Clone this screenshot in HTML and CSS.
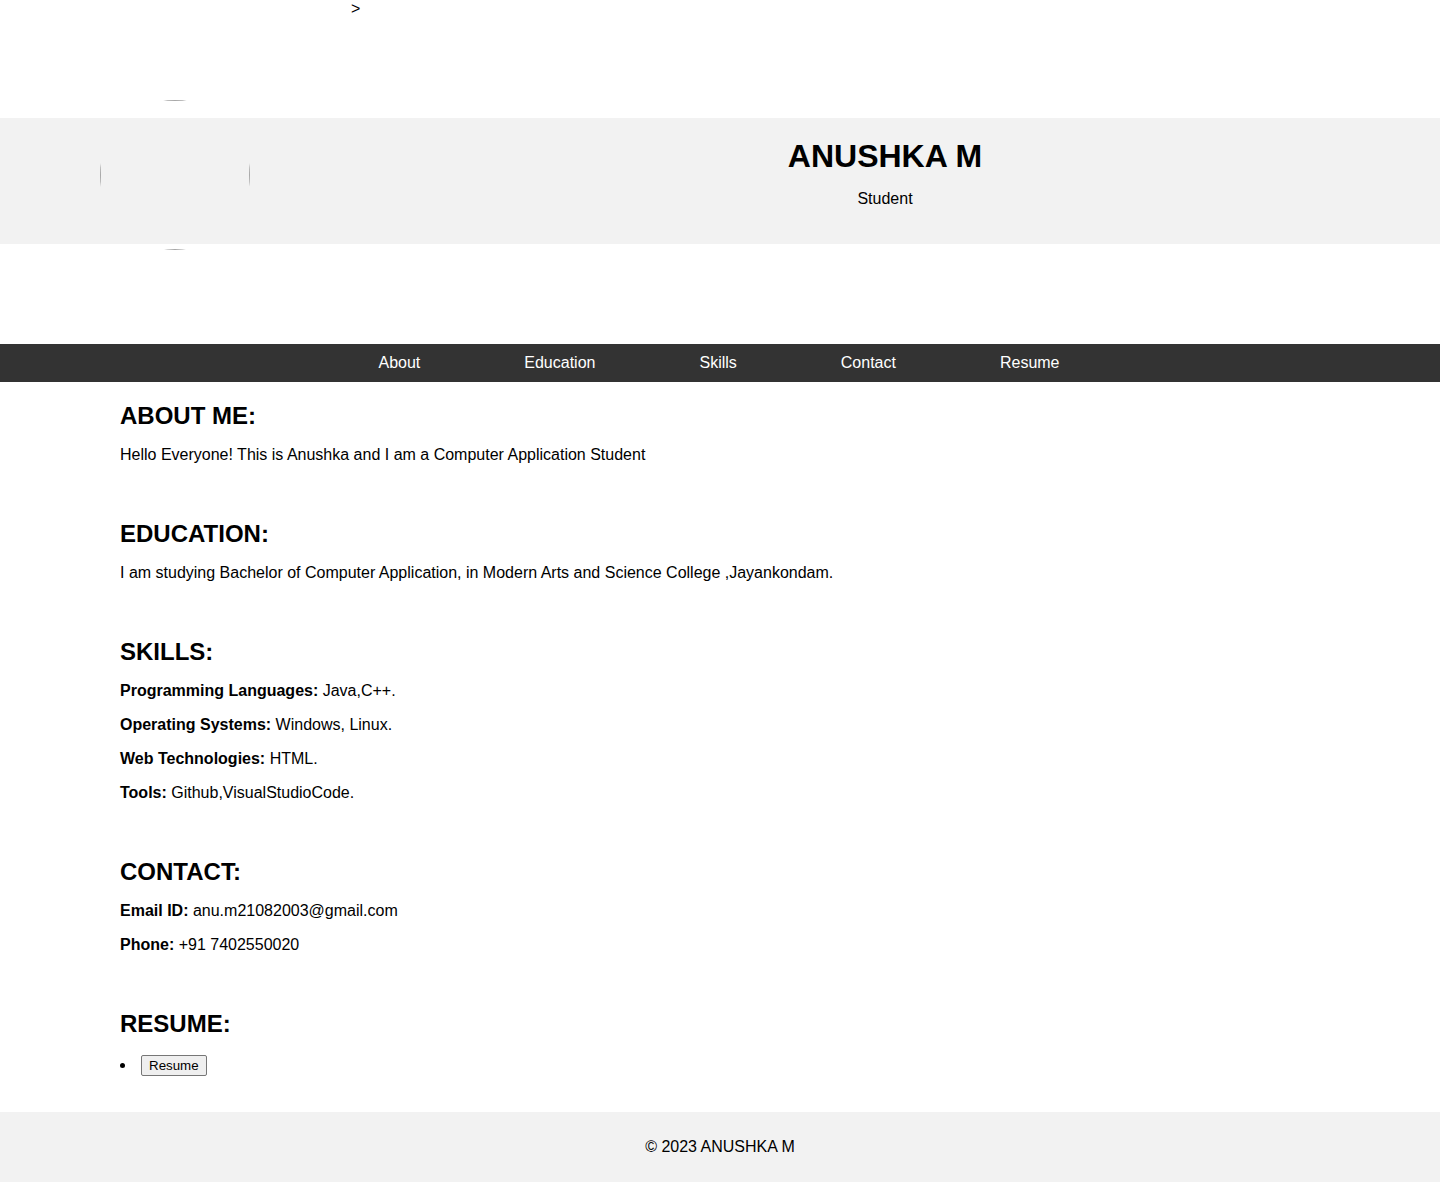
FILE: index.html
```html
<!DOCTYPE html>
<html lang="en">
<head>
<meta charset="utf-8">
<title>ANUSHKA M</title>
<link rel="stylesheet" href="styles.css">
</head>
<body>
<div class="stray">&gt;</div>
<div class="avatar"><span class="avatar-frame"></span></div>
<header class="hero">
  <div class="hero-text">
    <h1>ANUSHKA M</h1>
    <p>Student</p>
  </div>
</header>
<nav class="topnav">
  <a href="#about">About</a>
  <a href="#education">Education</a>
  <a href="#skills">Skills</a>
  <a href="#contact">Contact</a>
  <a href="#resume">Resume</a>
</nav>
<main class="content">
  <section class="block" id="about">
    <h2>ABOUT ME:</h2>
    <p>Hello Everyone! This is Anushka and I am a Computer Application Student</p>
  </section>
  <section class="block" id="education">
    <h2>EDUCATION:</h2>
    <p>I am studying Bachelor of Computer Application, in Modern Arts and Science College ,Jayankondam.</p>
  </section>
  <section class="block" id="skills">
    <h2>SKILLS:</h2>
    <p><strong>Programming Languages:</strong> Java,C++.</p>
    <p><strong>Operating Systems:</strong> Windows, Linux.</p>
    <p><strong>Web Technologies:</strong> HTML.</p>
    <p><strong>Tools:</strong> Github,VisualStudioCode.</p>
  </section>
  <section class="block" id="contact">
    <h2>CONTACT:</h2>
    <p><strong>Email ID:</strong> anu.m21082003@gmail.com</p>
    <p><strong>Phone:</strong> +91 7402550020</p>
  </section>
  <section class="block" id="resume">
    <h2>RESUME:</h2>
    <ul class="resume-list">
      <li><button class="resume-btn" type="button">Resume</button></li>
    </ul>
  </section>
</main>
<footer class="site-footer">
  <p>&copy; 2023 ANUSHKA M</p>
</footer>
</body>
</html>
```
FILE: styles.css
```css
html, body {
  margin: 0;
  padding: 0;
}
body {
  font-family: "Liberation Sans", Arial, sans-serif;
  font-size: 16px;
  color: #000;
  background: #fff;
  position: relative;
}
.stray {
  padding-left: 351px;
}
.avatar {
  position: absolute;
  top: 100px;
  left: 100px;
  width: 150px;
  height: 150px;
  border-radius: 50%;
  overflow: hidden;
  z-index: 2;
}
.avatar-frame {
  display: block;
  box-sizing: border-box;
  width: 150px;
  height: 150px;
  border: 1px solid #a8a8a8;
}
.hero {
  background: #f2f2f2;
  margin: 100px 0;
  padding: 20px 20px 20px 350px;
}
.hero-text {
  text-align: center;
}
.hero-text h1 {
  font-size: 32px;
  margin: 0;
}
.hero-text p {
  margin: 15px 0 16px;
}
.topnav {
  background: #333;
  display: flex;
  justify-content: center;
}
.topnav a {
  color: #fff;
  text-decoration: none;
  padding: 10px 52px;
}
.topnav a:first-child {
  margin-left: -2px;
}
.content {
  padding: 0 120px;
}
.block {
  padding-bottom: 20px;
}
.block h2 {
  font-size: 24px;
  margin: 19.92px 0 10px;
}
.block p {
  margin: 16px 0;
}
.resume-list {
  margin: 16px 0;
  padding-left: 0;
  list-style-position: inside;
}
.resume-list li {
  line-height: 22px;
}
.resume-btn {
  font-family: "Liberation Sans", Arial, sans-serif;
  font-size: 13.33px;
  line-height: normal;
  padding: 2px 7px;
  margin-left: -1px;
  border: 1px solid #767676;
  border-radius: 2px;
  background: #efefef;
  color: #000;
  vertical-align: middle;
}
.site-footer {
  background: #f2f2f2;
  text-align: center;
  padding: 10px 0;
}
.site-footer p {
  margin: 16px 0;
}
```
